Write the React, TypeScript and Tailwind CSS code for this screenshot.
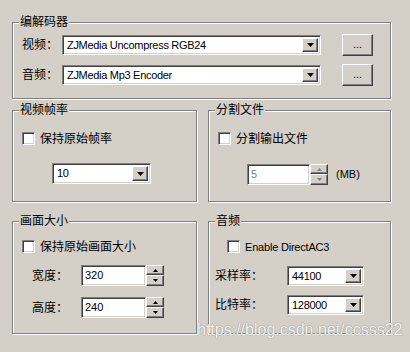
import React from "react";

const sunken =
  "border border-t-[#808080] border-l-[#808080] border-r-white border-b-white shadow-[inset_1px_1px_0_#404040,inset_-1px_-1px_0_#d4d0c8]";
const raised =
  "border border-t-white border-l-white border-r-[#404040] border-b-[#404040] shadow-[inset_-1px_-1px_0_#808080] bg-[#d4d0c8]";

function Group({
  title,
  className,
  children,
}: {
  title: string;
  className: string;
  children?: React.ReactNode;
}) {
  return (
    <div
      className={
        "relative border border-[#808080] shadow-[inset_1px_1px_0_#fff,1px_1px_0_#fff] " +
        className
      }
    >
      <span className="absolute left-[6px] top-[-8px] bg-[#d4d0c8] px-[1px] text-[12px] leading-[14px] text-black">
        {title}
      </span>
      {children}
    </div>
  );
}

function DownTri({ gray }: { gray?: boolean }) {
  return (
    <svg width="7" height="4" viewBox="0 0 7 4">
      <polygon points="0,0 7,0 3.5,4" fill={gray ? "#808080" : "#000"} />
    </svg>
  );
}

function Combo({ value, className }: { value: string; className: string }) {
  return (
    <div className={"flex items-stretch bg-white p-[2px] " + sunken + " " + className}>
      <div className="flex flex-1 items-center overflow-hidden whitespace-nowrap pl-[2px] text-[11px] leading-[13px] tracking-[-0.3px] text-black">
        {value}
      </div>
      <div className={"flex w-[16px] items-center justify-center " + raised}>
        <DownTri />
      </div>
    </div>
  );
}

function Check({ label, latin }: { label: string; latin?: boolean }) {
  return (
    <div className="flex h-[13px] items-center gap-[5px]">
      <div className={"h-[13px] w-[13px] bg-white " + sunken} />
      <span
        className={
          (latin ? "text-[11px] tracking-[-0.2px]" : "text-[12px]") +
          " whitespace-nowrap leading-[14px] text-black"
        }
      >
        {label}
      </span>
    </div>
  );
}

function SpinBtns({ gray }: { gray?: boolean }) {
  const c = gray ? "#808080" : "#000";
  return (
    <div className="flex w-[18px] flex-col">
      <div className={"flex h-[10px] items-center justify-center " + raised}>
        <svg width="5" height="3" viewBox="0 0 5 3">
          <polygon points="2.5,0 5,3 0,3" fill={c} />
        </svg>
      </div>
      <div className={"flex h-[11px] items-center justify-center " + raised}>
        <svg width="5" height="3" viewBox="0 0 5 3">
          <polygon points="0,0 5,0 2.5,3" fill={c} />
        </svg>
      </div>
    </div>
  );
}

function Spin({
  value,
  width,
  gray,
}: {
  value: string;
  width: string;
  gray?: boolean;
}) {
  return (
    <div className="flex h-[21px] items-stretch">
      <div
        className={
          "flex items-center bg-white pl-[3px] text-[11px] leading-[13px] " +
          (gray ? "text-[#808080] " : "text-black ") +
          sunken +
          " " +
          width
        }
      >
        {value}
      </div>
      <SpinBtns gray={gray} />
    </div>
  );
}

export default function App() {
  return (
    <div className="relative h-[352px] w-[410px] overflow-hidden bg-[#d4d0c8] pl-[12px] pt-[22px] font-['Liberation_Sans','Noto_Sans_CJK_SC',sans-serif] text-black">
      {/* 编解码器 */}
      <Group title="编解码器" className="h-[77px] w-[379px]">
        <div className="flex flex-col gap-[8px] pl-[9px] pt-[11px]">
          {[
            ["视频：", "ZJMedia Uncompress RGB24"],
            ["音频：", "ZJMedia Mp3 Encoder"],
          ].map(([l, v]) => (
            <div key={l} className="flex h-[22px] items-center">
              <span className="w-[40px] text-[12px] leading-[14px]">{l}</span>
              <Combo value={v} className="h-[20px] w-[259px]" />
              <div
                className={
                  "ml-[21px] flex h-[22px] w-[31px] items-center justify-center pb-[2px] text-[11px] leading-[11px] " +
                  raised
                }
              >
                ...
              </div>
            </div>
          ))}
        </div>
      </Group>

      <div className="mt-[11px] flex gap-[11px]">
        {/* 视频帧率 */}
        <Group title="视频帧率" className="h-[92px] w-[185px]">
          <div className="flex flex-col pl-[9px] pt-[21px]">
            <Check label="保持原始帧率" />
            <div className="ml-[30px] mt-[18px]">
              <Combo value="10" className="h-[21px] w-[99px]" />
            </div>
          </div>
        </Group>

        {/* 分割文件 */}
        <Group title="分割文件" className="h-[92px] w-[183px]">
          <div className="flex flex-col pl-[9px] pt-[21px]">
            <Check label="分割输出文件" />
            <div className="ml-[29px] mt-[19px] flex items-center">
              <Spin value="5" width="w-[63px]" gray />
              <span className="ml-[8px] text-[11px] leading-[13px]">(MB)</span>
            </div>
          </div>
        </Group>
      </div>

      <div className="mt-[19px] flex gap-[11px]">
        {/* 画面大小 */}
        <Group title="画面大小" className="h-[113px] w-[185px]">
          <div className="flex flex-col pl-[9px] pt-[18px]">
            <Check label="保持原始画面大小" />
            <div className="ml-[10px] mt-[12px] flex flex-col gap-[11px]">
              {[
                ["宽度：", "320"],
                ["高度：", "240"],
              ].map(([l, v]) => (
                <div key={l} className="flex items-center">
                  <span className="w-[49px] text-[12px] leading-[14px]">{l}</span>
                  <Spin value={v} width="w-[65px]" />
                </div>
              ))}
            </div>
          </div>
        </Group>

        {/* 音频 */}
        <Group title="音频" className="h-[113px] w-[183px]">
          <div className="flex flex-col pt-[18px]">
            <div className="pl-[18px]">
              <Check label="Enable DirectAC3" latin />
            </div>
            <div className="ml-[6px] mt-[13px] flex flex-col gap-[9px]">
              {[
                ["采样率：", "44100"],
                ["比特率：", "128000"],
              ].map(([l, v]) => (
                <div key={l} className="flex items-center">
                  <span className="w-[72px] text-[12px] leading-[14px]">{l}</span>
                  <Combo value={v} className="h-[20px] w-[77px]" />
                </div>
              ))}
            </div>
          </div>
        </Group>
      </div>

      {/* watermark */}
      <div className="absolute left-[197px] top-[321px] whitespace-nowrap text-[16px] leading-[18px] text-white/90 [text-shadow:0_0_1px_#8c8c8c,0_0_1px_#8c8c8c]">
        https://blog.csdn.net/ccsss22
      </div>
    </div>
  );
}
